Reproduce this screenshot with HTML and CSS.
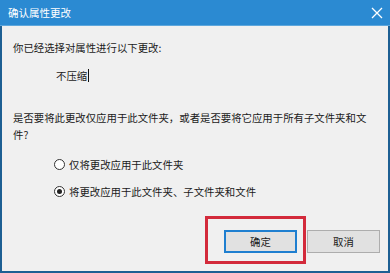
FILE: index.html
```html
<!DOCTYPE html>
<html lang="zh-CN">
<head>
<meta charset="utf-8">
<title>确认属性更改</title>
<link rel="stylesheet" href="styles.css">
</head>
<body>
<div class="window">
  <div class="titlebar">
    <span class="title">确认属性更改</span>
    <svg class="close" width="12" height="12" viewBox="0 0 12 12"><path d="M1 1 L11 11 M11 1 L1 11" stroke="#ffffff" stroke-width="1.3" fill="none"/></svg>
  </div>
  <div class="content">
    <div class="line first">你已经选择对属性进行以下更改:</div>
    <div class="line change">不压缩<span class="caret"></span></div>
    <div class="question">是否要将此更改仅应用于此文件夹，或者是否要将它应用于所有子文件夹和文件?</div>
    <div class="options">
      <div class="option"><span class="radio"></span><span>仅将更改应用于此文件夹</span></div>
      <div class="option"><span class="radio checked"></span><span>将更改应用于此文件夹、子文件夹和文件</span></div>
    </div>
    <div class="buttons">
      <div class="btn-wrap">
        <div class="btn primary">确定</div>
        <div class="highlight"></div>
      </div>
      <div class="btn">取消</div>
    </div>
  </div>
</div>
</body>
</html>
```
FILE: styles.css
```css
html, body {
  margin: 0;
  padding: 0;
}
body {
  width: 390px;
  height: 273px;
  overflow: hidden;
  font-family: "Noto Sans CJK SC", "Microsoft YaHei", sans-serif;
  font-size: 10.4px;
  color: #1a1a1a;
  background: #ffffff;
}
.window {
  width: 390px;
  height: 273px;
  box-sizing: border-box;
  background: #f0f0f0;
  border-left: 2px solid #1d5f93;
  border-right: 2px solid #1d5f93;
  border-bottom: 2px solid #1d5f93;
  display: flex;
  flex-direction: column;
}
.titlebar {
  height: 25px;
  margin: 0 -2px;
  background: #2b8ad2;
  display: flex;
  align-items: center;
  justify-content: space-between;
  padding: 0 7px 0 8px;
  border-bottom: 1px solid #5ea7dc;
}
.title {
  color: #ffffff;
  font-size: 10.5px;
}
.close {
  display: block;
}
.content {
  flex: 1;
  padding: 13px 8px 0 11px;
  display: flex;
  flex-direction: column;
}
.line, .question, .option {
  line-height: 17px;
}
.change {
  margin-top: 11px;
  padding-left: 43px;
  display: flex;
  align-items: center;
}
.caret {
  display: inline-block;
  width: 1px;
  height: 13px;
  background: #111;
  margin-left: 1px;
}
.question {
  margin-top: 25px;
  padding-right: 10px;
}
.options {
  margin-top: 13px;
  padding-left: 41px;
  display: flex;
  flex-direction: column;
  gap: 10px;
}
.option {
  display: flex;
  align-items: center;
  gap: 4px;
}
.radio {
  width: 11px;
  height: 11px;
  box-sizing: border-box;
  border: 1px solid #333;
  border-radius: 50%;
  background: #fff;
  display: flex;
  align-items: center;
  justify-content: center;
}
.radio.checked::after {
  content: "";
  width: 5px;
  height: 5px;
  border-radius: 50%;
  background: #222;
}
.buttons {
  margin-top: 30px;
  display: flex;
  justify-content: flex-end;
  gap: 10px;
}
.btn-wrap {
  position: relative;
}
.btn {
  width: 73px;
  height: 23px;
  box-sizing: border-box;
  border: 1px solid #adadad;
  background: #e1e1e1;
  display: flex;
  align-items: center;
  justify-content: center;
}
.btn.primary {
  border: 2px solid #1f7fd0;
}
.highlight {
  position: absolute;
  left: -19px;
  top: -14px;
  width: 101px;
  height: 48px;
  box-sizing: border-box;
  border: 3px solid #d32a3b;
}
```
